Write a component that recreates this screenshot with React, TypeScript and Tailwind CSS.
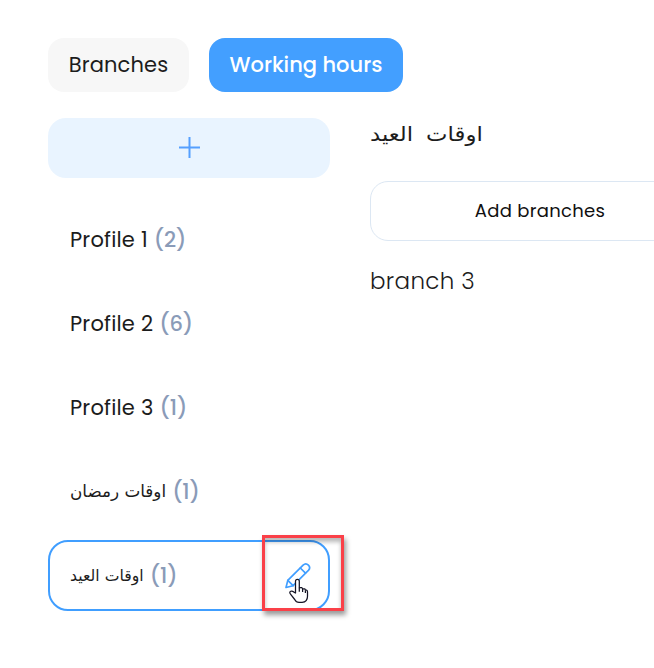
const latin = "font-['Poppins',sans-serif]";
const arabic = "font-['DejaVu_Sans',sans-serif]";

type Profile = { name: string; count: number; size: string; rtl?: boolean; active?: boolean };

const profiles: Profile[] = [
  { name: "Profile 1", count: 2, size: "" },
  { name: "Profile 2", count: 6, size: "" },
  { name: "Profile 3", count: 1, size: "" },
  { name: "اوقات رمضان", count: 1, size: "text-[16.8px]", rtl: true },
  { name: "اوقات العيد", count: 1, size: "text-[15.7px]", rtl: true, active: true },
];

function Pencil() {
  return (
    <svg width="28" height="28" viewBox="0 0 28 28" fill="none" stroke="#409eff" strokeWidth="1.7" strokeLinejoin="round" strokeLinecap="round">
      <path d="M2 25.5 3.8 18.4 19.1 3.1Q21.8.6 24.4 3.1 26.9 5.6 24.4 8.4L9.1 23.7Z" />
      <path d="m16.3 6 5.2 5.2M3.8 18.4l5.3 5.3" />
    </svg>
  );
}

function Hand() {
  return (
    <svg className="absolute left-[289px] top-[578px]" width="20" height="26" viewBox="0 0 20 26" fill="white" stroke="#151525" strokeWidth="1.25" strokeLinejoin="round">
      <path d="M6.5 15V3.2a1.9 1.9 0 0 1 3.8 0v6.6q3-.8 3.3 1.1 2.5-.5 2.8 1.1 2.1-.2 2.1 2v4.2q0 5.6-5.4 6.2H10q-2.8 0-4.3-2.9l-4-5.2q-1.8-2.2 0-3 1.4-.6 3.2.8Z" />
      <path d="M10.3 9.8v4M13.6 11v3M16.4 12.2V15" fill="none" />
    </svg>
  );
}

export default function App() {
  return (
    <main className={`relative h-[668px] w-[654px] overflow-hidden bg-white pl-12 pt-[38px] text-[#1c1c1c] ${latin}`}>
      <nav className="flex gap-5">
        <button className="h-[54px] w-[141px] whitespace-nowrap rounded-2xl bg-[#f7f7f7] text-[21px] tracking-[0.15px]"><span>Branches</span></button>
        <button className="h-[54px] w-[194px] whitespace-nowrap rounded-2xl bg-[#439fff] text-[21px] font-medium text-white"><span>Working hours</span></button>
      </nav>
      <div className="mt-[26px] flex gap-10">
        <aside className="w-[282px] shrink-0">
          <button className="flex h-[60px] w-full items-center justify-center rounded-[18px] bg-[#e9f4ff]">
            <svg width="22" height="22" viewBox="0 0 22 22" stroke="#559fff" strokeWidth="2"><path d="M1 10.5h21M11.5 0v21" /></svg>
          </button>
          <ul className="mt-[26px] flex flex-col gap-[13px]">
            {profiles.map((p) => (
              <li key={p.name} className={`flex h-[71px] items-center justify-between rounded-[20px] border-2 pl-5 pr-4 ${p.active ? "border-[#409eff]" : "border-transparent"}`}>
                <span className="flex items-center gap-1.5 whitespace-nowrap text-[21px]">
                  <span dir={p.rtl ? "rtl" : "ltr"} className={p.rtl ? `${p.size} ${arabic}` : "tracking-[0.2px]"}>{p.name}</span>
                  <span className="font-medium tracking-[-0.1px] text-[#8a9bb8]">({p.count})</span>
                </span>
                {p.active && <Pencil />}
              </li>
            ))}
          </ul>
        </aside>
        <section className="w-[340px] shrink-0">
          <h1 className="flex h-8 items-center"><span dir="rtl" className={`origin-left scale-x-[1.14] whitespace-nowrap text-[20px] [word-spacing:5px] ${arabic}`}>اوقات العيد</span></h1>
          <button className="mt-[31px] h-[60px] w-full whitespace-nowrap rounded-[18px] border border-[#dce7f3] pb-0.5 text-[18px] tracking-[0.3px] text-[#101010]"><span>Add branches</span></button>
          <p className="mt-6 whitespace-nowrap text-[23px] font-light leading-8 tracking-[0.35px]"><span>branch 3</span></p>
        </section>
      </div>
      <div className="absolute left-[262px] top-[535px] h-[76px] w-[82px] border-[3px] border-[#fa4048] shadow-[2px_4px_5px_rgba(0,0,0,0.4),inset_0px_4px_4px_rgba(0,0,0,0.28)]" />
      <Hand />
    </main>
  );
}
